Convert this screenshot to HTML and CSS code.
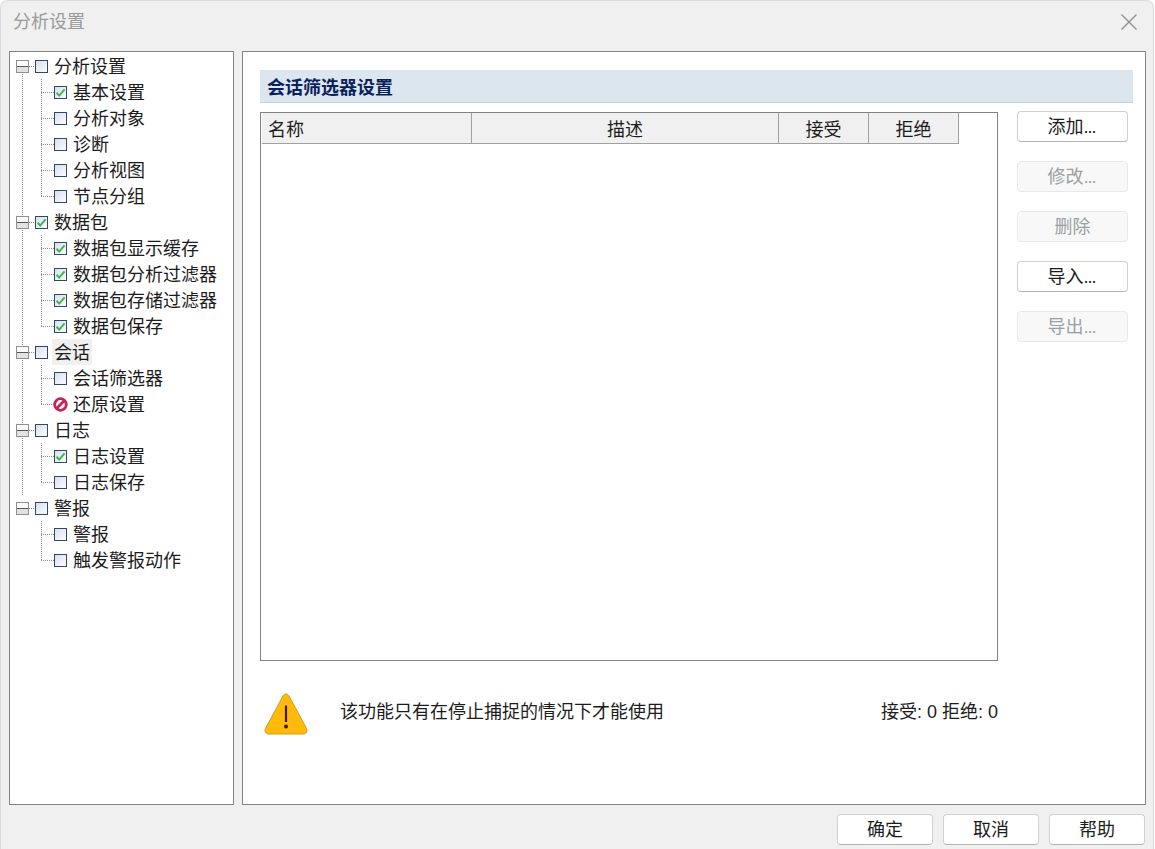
FILE: index.html
```html
<!DOCTYPE html>
<html lang="zh-CN">
<head>
<meta charset="utf-8">
<title>分析设置</title>
<link rel="stylesheet" href="styles.css">
</head>
<body>
<svg class="defs" width="0" height="0" aria-hidden="true">
  <symbol id="tick" viewBox="0 0 13 13"><path d="M2.6 6.8 5.2 9.6 10.6 3.4" fill="none" stroke="#3fb54a" stroke-width="2"/></symbol>
</svg>
<div class="window">
  <header class="titlebar">
    <span class="title">分析设置</span>
    <svg class="close" width="18" height="18" viewBox="0 0 18 18"><path d="M1.5 1.5 16.5 16.5M16.5 1.5 1.5 16.5" stroke="#8c8c8c" stroke-width="1.3" fill="none"/></svg>
  </header>
  <main class="content">
    <nav class="tree-panel">
      <div class="tree">
        <div class="row parent"><span class="exp"></span><span class="dash"></span><span class="cb"></span><span class="label">分析设置</span></div>
        <div class="row child"><span class="conn"></span><span class="cb"><svg width="13" height="13"><use href="#tick"/></svg></span><span class="label">基本设置</span></div>
        <div class="row child"><span class="conn"></span><span class="cb"></span><span class="label">分析对象</span></div>
        <div class="row child"><span class="conn"></span><span class="cb"></span><span class="label">诊断</span></div>
        <div class="row child"><span class="conn"></span><span class="cb"></span><span class="label">分析视图</span></div>
        <div class="row child last"><span class="conn"></span><span class="cb"></span><span class="label">节点分组</span></div>

        <div class="row parent"><span class="exp"></span><span class="dash"></span><span class="cb"><svg width="13" height="13"><use href="#tick"/></svg></span><span class="label">数据包</span></div>
        <div class="row child"><span class="conn"></span><span class="cb"><svg width="13" height="13"><use href="#tick"/></svg></span><span class="label">数据包显示缓存</span></div>
        <div class="row child"><span class="conn"></span><span class="cb"><svg width="13" height="13"><use href="#tick"/></svg></span><span class="label">数据包分析过滤器</span></div>
        <div class="row child"><span class="conn"></span><span class="cb"><svg width="13" height="13"><use href="#tick"/></svg></span><span class="label">数据包存储过滤器</span></div>
        <div class="row child last"><span class="conn"></span><span class="cb"><svg width="13" height="13"><use href="#tick"/></svg></span><span class="label">数据包保存</span></div>

        <div class="row parent"><span class="exp"></span><span class="dash"></span><span class="cb"></span><span class="label selected">会话</span></div>
        <div class="row child"><span class="conn"></span><span class="cb"></span><span class="label">会话筛选器</span></div>
        <div class="row child last"><span class="conn"></span><svg class="block" width="15" height="15" viewBox="0 0 15 15"><circle cx="7.5" cy="7.5" r="5.8" fill="#fff" stroke="#c2255c" stroke-width="2.8"/><path d="M3.8 11.2 11.2 3.8" stroke="#c2255c" stroke-width="2.8"/></svg><span class="label">还原设置</span></div>

        <div class="row parent"><span class="exp"></span><span class="dash"></span><span class="cb"></span><span class="label">日志</span></div>
        <div class="row child"><span class="conn"></span><span class="cb"><svg width="13" height="13"><use href="#tick"/></svg></span><span class="label">日志设置</span></div>
        <div class="row child last"><span class="conn"></span><span class="cb"></span><span class="label">日志保存</span></div>

        <div class="row parent"><span class="exp"></span><span class="dash"></span><span class="cb"></span><span class="label">警报</span></div>
        <div class="row child"><span class="conn"></span><span class="cb"></span><span class="label">警报</span></div>
        <div class="row child last"><span class="conn"></span><span class="cb"></span><span class="label">触发警报动作</span></div>
      </div>
    </nav>
    <section class="main-panel">
      <h1 class="section-head">会话筛选器设置</h1>
      <div class="columns">
        <div class="left">
          <div class="listbox">
            <div class="list-head">
              <div class="col col-name">名称</div>
              <div class="col col-desc">描述</div>
              <div class="col col-accept">接受</div>
              <div class="col col-reject">拒绝</div>
            </div>
          </div>
          <div class="notice">
            <svg class="warn" width="44" height="44" viewBox="0 0 44 44">
              <path d="M19.2 3.6C20.5 1.4 23.5 1.4 24.8 3.6L42.6 36.6C43.8 39 42.4 42 39.6 42H4.4C1.6 42 .2 39 1.4 36.6Z" fill="#ffba0c" stroke="#d29a1a" stroke-width="1"/>
              <path d="M22 13.5V30" stroke="#3d1c00" stroke-width="2.2"/>
              <circle cx="22" cy="34.6" r="2" fill="#3d1c00"/>
            </svg>
            <span class="notice-text">该功能只有在停止捕捉的情况下才能使用</span>
            <span class="stats">接受: 0 拒绝: 0</span>
          </div>
        </div>
        <div class="side-buttons">
          <button class="btn">添加<span class="dots">...</span></button>
          <button class="btn off">修改<span class="dots">...</span></button>
          <button class="btn off">删除</button>
          <button class="btn">导入<span class="dots">...</span></button>
          <button class="btn off">导出<span class="dots">...</span></button>
        </div>
      </div>
    </section>
  </main>
  <footer class="footer">
    <button class="btn wide">确定</button>
    <button class="btn wide">取消</button>
    <button class="btn wide">帮助</button>
  </footer>
</div>
</body>
</html>
```
FILE: styles.css
```css
* { box-sizing: border-box; }
html, body { margin: 0; padding: 0; height: 100%; background: #fff; }
body {
  font-family: "Liberation Sans", "Noto Sans CJK SC", sans-serif;
  font-size: 18px;
  color: #1c1c1c;
  overflow: hidden;
}
.defs { display: block; height: 0; }
.window {
  width: 1154px;
  height: 849px;
  background: #f0f0f0;
  border-radius: 8px 8px 0 0;
  border: 1px solid #dcdcdc;
  border-bottom: 0;
  display: flex;
  flex-direction: column;
}
.titlebar {
  height: 50px;
  flex: none;
  display: flex;
  align-items: flex-start;
  justify-content: space-between;
  padding: 8px 15px 0 12px;
}
.title { color: #9a9a9a; line-height: 26px; }
.close { margin-top: 4px; }
.content {
  height: 754px;
  flex: none;
  display: flex;
  gap: 8px;
  padding-left: 8px;
}
.tree-panel {
  width: 225px;
  background: #fff;
  border: 1px solid #828282;
  padding: 1px 0 0 0;
}
.tree {
  background-image: repeating-linear-gradient(to bottom, #8a8a8a 0 1px, transparent 1px 2px);
  background-repeat: no-repeat;
  background-position: 12px 13px;
  background-size: 1px calc(100% - 91px);
}
.row { height: 26px; display: flex; align-items: center; }
.parent { padding-left: 6px; }
.exp {
  width: 13px;
  height: 13px;
  flex: none;
  border: 1px solid #8f8f8f;
  background: linear-gradient(to bottom, #fff 0 45%, #555 45% 54%, #e2e2e2 54% 100%);
  background-clip: padding-box;
}
.dash {
  width: 6px;
  height: 1px;
  flex: none;
  background: repeating-linear-gradient(to right, #8a8a8a 0 1px, transparent 1px 2px);
}
.cb {
  width: 13px;
  height: 13px;
  flex: none;
  border: 1px solid #2f4a68;
  background: linear-gradient(135deg, #d9dfec, #fbfcfe);
  display: block;
}
.cb svg { display: block; margin: -1px; }
.label { margin-left: 6px; padding: 3px 0 0; line-height: 23px; white-space: nowrap; }
.selected { background: #f0f0f0; margin-left: 4px; padding: 3px 2px 0; }
.conn {
  width: 13px;
  height: 100%;
  flex: none;
  margin-left: 31px;
  background-image:
    repeating-linear-gradient(to bottom, #8a8a8a 0 1px, transparent 1px 2px),
    repeating-linear-gradient(to right, #8a8a8a 0 1px, transparent 1px 2px);
  background-repeat: no-repeat;
  background-position: 0 0, 0 13px;
  background-size: 1px 100%, 100% 1px;
}
.last .conn { background-size: 1px 50%, 100% 1px; }
.block { flex: none; margin: 0 -1px; }
.main-panel {
  width: 904px;
  background: #fff;
  border: 1px solid #828282;
  padding: 18px 12px 0 17px;
}
.section-head {
  margin: 0;
  height: 33px;
  padding: 2px 0 0 7px;
  background: #dce6ee;
  border-bottom: 1px solid #c5d0d8;
  color: #0a1f5c;
  font-size: 18px;
  font-weight: 700;
  line-height: 33px;
}
.columns { display: flex; gap: 19px; margin-top: 9px; }
.left { width: 738px; flex: none; }
.listbox {
  height: 549px;
  border: 1px solid #828282;
  background: #fff;
  padding-left: 1px;
}
.list-head { display: flex; width: 697px; height: 31px; background: #f0f0f0; border-bottom: 1px solid #a0a0a0; }
.col {
  line-height: 35px;
  text-align: center;
  border-right: 1px solid #a0a0a0;
  flex: none;
}
.col-name { width: 210px; text-align: left; padding-left: 6px; }
.col-desc { width: 307px; }
.col-accept { width: 90px; }
.col-reject { width: 90px; }
.notice { display: flex; align-items: center; margin-top: 31px; padding-left: 4px; height: 44px; }
.warn { flex: none; }
.notice-text { margin-left: 32px; line-height: 40px; align-self: flex-start; }
.stats { margin-left: auto; line-height: 40px; align-self: flex-start; }
.side-buttons { width: 111px; flex: none; display: flex; flex-direction: column; gap: 19px; margin-top: -1px; }
.btn {
  height: 31px;
  width: 111px;
  padding: 0;
  font: inherit;
  line-height: 26px;
  color: #1c1c1c;
  background: #fff;
  border: 1px solid #d0d0d0;
  border-bottom-color: #b4b4b4;
  border-radius: 4px;
}
.dots { letter-spacing: -1px; margin-right: 2px; }
.off { color: #98a0a4; background: #f8f8f8; border-color: #e8e8e8; }
.footer {
  display: flex;
  justify-content: flex-end;
  gap: 10px;
  padding: 9px 8px 0 0;
}
.wide { width: 96px; }
```
